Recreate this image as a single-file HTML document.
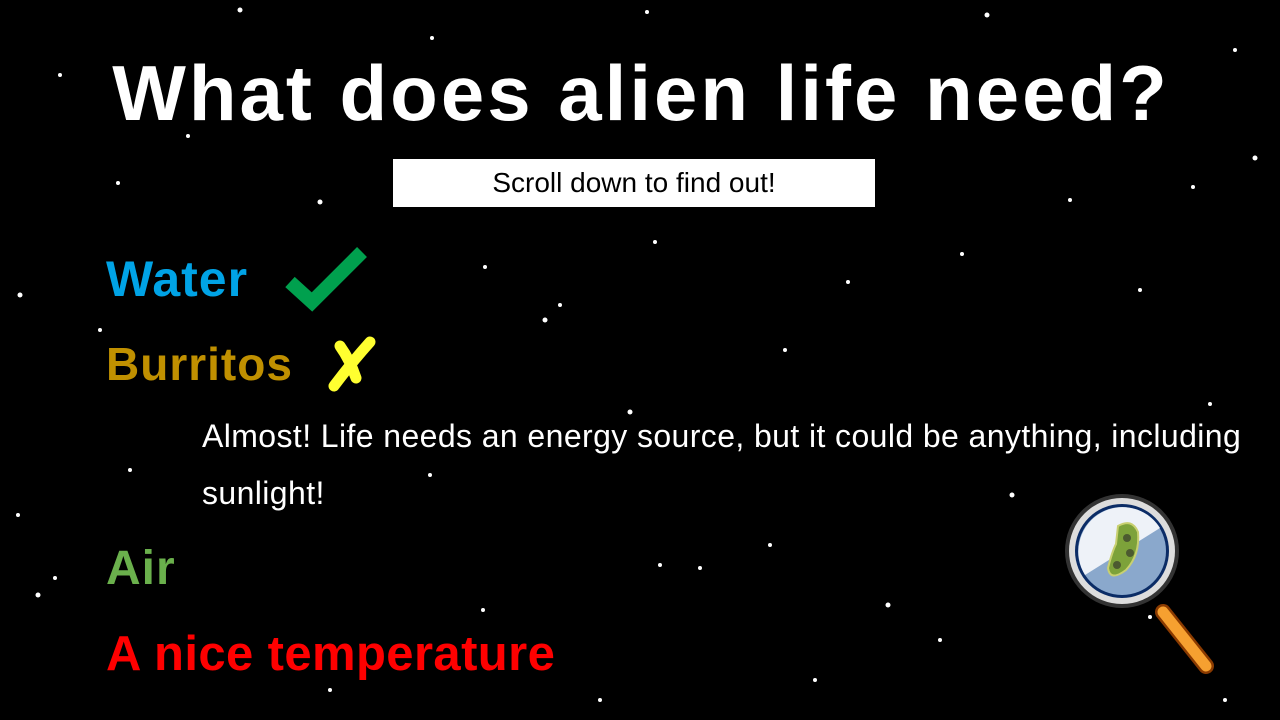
<!DOCTYPE html>
<html><head><meta charset="utf-8"><style>
body{margin:0;width:1280px;height:720px;background:#000;overflow:hidden;position:relative;font-family:"Comic Sans MS","Liberation Sans",sans-serif;}
.t{position:absolute;white-space:nowrap;font-weight:bold;letter-spacing:1px}
</style></head><body>
<svg width="1280" height="720" style="position:absolute;left:0;top:0">
<g fill="#fff">
<circle cx="240" cy="10" r="2.5"/><circle cx="647" cy="12" r="2"/><circle cx="987" cy="15" r="2.5"/><circle cx="432" cy="38" r="2"/><circle cx="60" cy="75" r="2"/><circle cx="1235" cy="50" r="2"/><circle cx="188" cy="136" r="2"/><circle cx="1255" cy="158" r="2.5"/><circle cx="118" cy="183" r="2"/><circle cx="1193" cy="187" r="2"/><circle cx="320" cy="202" r="2.5"/><circle cx="1070" cy="200" r="2"/><circle cx="655" cy="242" r="2"/><circle cx="962" cy="254" r="2"/><circle cx="20" cy="295" r="2.5"/><circle cx="560" cy="305" r="2"/><circle cx="545" cy="320" r="2.5"/><circle cx="485" cy="267" r="2"/><circle cx="848" cy="282" r="2"/><circle cx="1140" cy="290" r="2"/><circle cx="100" cy="330" r="2"/><circle cx="785" cy="350" r="2"/><circle cx="630" cy="412" r="2.5"/><circle cx="1210" cy="404" r="2"/><circle cx="130" cy="470" r="2"/><circle cx="430" cy="475" r="2"/><circle cx="1012" cy="495" r="2.5"/><circle cx="18" cy="515" r="2"/><circle cx="770" cy="545" r="2"/><circle cx="660" cy="565" r="2"/><circle cx="700" cy="568" r="2"/><circle cx="55" cy="578" r="2"/><circle cx="38" cy="595" r="2.5"/><circle cx="483" cy="610" r="2"/><circle cx="888" cy="605" r="2.5"/><circle cx="940" cy="640" r="2"/><circle cx="1150" cy="617" r="2"/><circle cx="330" cy="690" r="2"/><circle cx="600" cy="700" r="2"/><circle cx="1225" cy="700" r="2"/><circle cx="815" cy="680" r="2"/>
</g>
<path d="M290 282 L312 302 L362 252" stroke="#00a04e" stroke-width="14" fill="none" stroke-linejoin="miter"/>
<path d="M340 346 Q350 360 356 378 M370 342 Q352 362 334 386" stroke="#ffff30" stroke-width="11" fill="none" stroke-linecap="round"/>
<line x1="1163" y1="612" x2="1206" y2="666" stroke="#8a3a00" stroke-width="16" stroke-linecap="round"/>
<line x1="1163" y1="612" x2="1206" y2="666" stroke="#f6a030" stroke-width="11" stroke-linecap="round"/>
<circle cx="1122" cy="551" r="57" fill="#333"/>
<circle cx="1122" cy="551" r="53" fill="#ddd"/>
<circle cx="1122" cy="551" r="47" fill="#0b2c66"/>
<circle cx="1122" cy="551" r="44" fill="#8aa8cc"/>
<path d="M1080 540 A44 44 0 0 1 1160 528 L1085 575 A44 44 0 0 1 1080 540Z" fill="#eef2f8"/>
<path d="M1118 526 Q1132 518 1138 532 Q1140 555 1126 570 Q1110 582 1108 568 Q1112 552 1116 544Z" fill="#7da23a" stroke="#c8d070" stroke-width="2"/>
<circle cx="1127" cy="538" r="4" fill="#4c5a30"/><circle cx="1130" cy="553" r="4" fill="#4c5a30"/><circle cx="1117" cy="565" r="4" fill="#4c5a30"/>
</svg>
<div class="t" style="left:0;width:1282px;text-align:center;top:48px;font-size:78px;color:#fff;letter-spacing:3px">What does alien life need?</div>
<div style="position:absolute;left:393px;top:159px;width:482px;height:48px;background:#fff;color:#000;text-align:center;font-size:28px;line-height:48px">Scroll down to find out!</div>
<div class="t" style="left:106px;top:250px;font-size:50px;color:#00a3e6">Water</div>
<div class="t" style="left:106px;top:337px;font-size:46px;color:#c09000">Burritos</div>
<div style="position:absolute;left:202px;top:408px;font-size:32px;line-height:57px;color:#fff;white-space:nowrap;letter-spacing:0.4px">Almost! Life needs an energy source, but it could be anything, including<br>sunlight!</div>
<div class="t" style="left:106px;top:541px;font-size:48px;color:#6ab04c">Air</div>
<div class="t" style="left:106px;top:626px;font-size:49px;color:#ff0000;letter-spacing:0.4px">A nice temperature</div>
</body></html>
